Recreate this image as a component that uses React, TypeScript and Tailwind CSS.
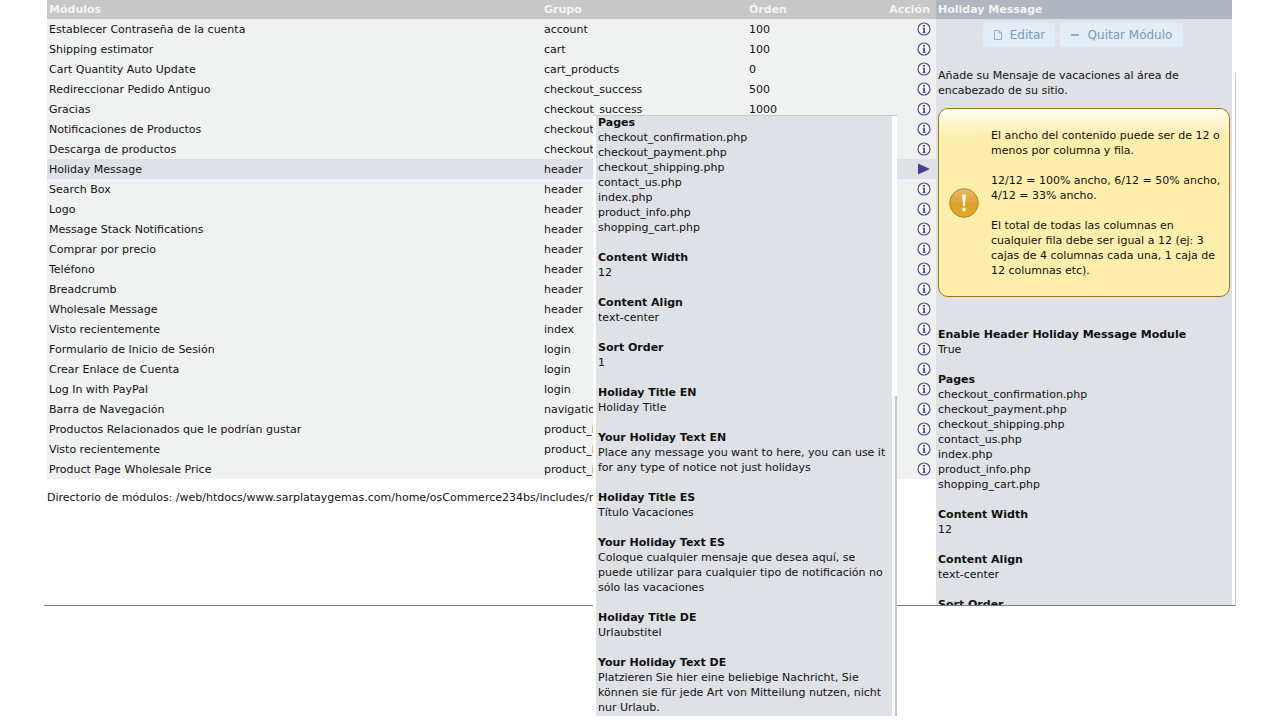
const rows = [
  ["Establecer Contraseña de la cuenta", "account", "100"],
  ["Shipping estimator", "cart", "100"],
  ["Cart Quantity Auto Update", "cart_products", "0"],
  ["Redireccionar Pedido Antiguo", "checkout_success", "500"],
  ["Gracias", "checkout_success", "1000"],
  ["Notificaciones de Productos", "checkout_success", "1000"],
  ["Descarga de productos", "checkout_success", "1000"],
  ["Holiday Message", "header", "1"],
  ["Search Box", "header", "2"],
  ["Logo", "header", "3"],
  ["Message Stack Notifications", "header", "4"],
  ["Comprar por precio", "header", "5"],
  ["Teléfono", "header", "6"],
  ["Breadcrumb", "header", "7"],
  ["Wholesale Message", "header", "8"],
  ["Visto recientemente", "index", "100"],
  ["Formulario de Inicio de Sesión", "login", "100"],
  ["Crear Enlace de Cuenta", "login", "200"],
  ["Log In with PayPal", "login", "300"],
  ["Barra de Navegación", "navigation", "100"],
  ["Productos Relacionados que le podrían gustar", "product_info", "100"],
  ["Visto recientemente", "product_info", "200"],
  ["Product Page Wholesale Price", "product_info", "300"],
]

const settings: [string, string[]][] = [
  ["Pages", ["checkout_confirmation.php", "checkout_payment.php", "checkout_shipping.php", "contact_us.php", "index.php", "product_info.php", "shopping_cart.php"]],
  ["Content Width", ["12"]],
  ["Content Align", ["text-center"]],
  ["Sort Order", ["1"]],
  ["Holiday Title EN", ["Holiday Title"]],
  ["Your Holiday Text EN", ["Place any message you want to here, you can use it for any type of notice not just holidays"]],
  ["Holiday Title ES", ["Título Vacaciones"]],
  ["Your Holiday Text ES", ["Coloque cualquier mensaje que desea aquí, se puede utilizar para cualquier tipo de notificación no sólo las vacaciones"]],
  ["Holiday Title DE", ["Urlaubstitel"]],
  ["Your Holiday Text DE", ["Platzieren Sie hier eine beliebige Nachricht, Sie können sie für jede Art von Mitteilung nutzen, nicht nur Urlaub."]],
]

function InfoIcon() {
  return (
    <svg width="14" height="14" viewBox="0 0 14 14" fill="none">
      <circle cx="7" cy="7" r="6" fill="#fff" stroke="#4f4a94" strokeWidth="1.2" />
      <rect x="6" y="3" width="2" height="1.6" fill="#4f4a94" />
      <path d="M5.4 5.8H8V10.2H8.8V11H5.4V10.2H6.2V6.6H5.4Z" fill="#4f4a94" />
    </svg>
  )
}

function ArrowIcon() {
  return (
    <svg width="14" height="12" viewBox="0 0 14 12">
      <path d="M1 0.5L13 6L1 11.5Z" fill="#44409a" />
    </svg>
  )
}

function WarningIcon() {
  return (
    <svg width="30" height="30" viewBox="0 0 30 30">
      <defs>
        <linearGradient id="warn" x1="0" y1="0" x2="0" y2="1">
          <stop offset="0" stopColor="#e9b968" />
          <stop offset="0.55" stopColor="#dc9f2c" />
          <stop offset="1" stopColor="#e2ab1c" />
        </linearGradient>
      </defs>
      <circle cx="15" cy="15" r="14.3" fill="url(#warn)" stroke="#b5832c" />
      <path d="M13 6.5H17L16 18H14Z" fill="#fff6df" />
      <circle cx="15" cy="21.5" r="2" fill="#fff6df" />
    </svg>
  )
}

function PageIcon() {
  return (
    <svg width="10" height="12" viewBox="0 0 10 12" fill="none" stroke="#8fb1cf">
      <path d="M1.5 1.5H6L8.5 4V10.5H1.5Z" />
      <path d="M6 1.5V4H8.5" />
    </svg>
  )
}

function Settings({ items }: { items: [string, string[]][] }) {
  return (
    <>
      {items.map(([title, lines]) => (
        <div key={title} className="mb-[15px]">
          <div className="font-bold">{title}</div>
          {lines.map((line) => (
            <div key={line}>{line}</div>
          ))}
        </div>
      ))}
    </>
  )
}

export default function App() {
  return (
    <div className="relative h-[720px] overflow-hidden bg-white font-['DejaVu_Sans','Liberation_Sans',sans-serif] text-[11px] leading-[15px] text-[#111]">
      <div className="ml-[44px] flex h-[606px] w-[1192px] overflow-hidden border-b border-[#77797e] pl-[3px]">
        <div className="w-[889px] shrink-0">
          <div className="grid h-[19px] grid-cols-[495px_205px_1fr_auto] items-center bg-[#c7c7c7] pl-[2px] pr-[6px] font-bold text-[#f4f4f4]">
            <span>Módulos</span>
            <span>Grupo</span>
            <span>Órden</span>
            <span>Acción</span>
          </div>
          {rows.map(([name, group, order], i) => (
            <div
              key={name + i}
              className={`grid h-5 grid-cols-[495px_205px_1fr_14px] items-center pl-[2px] pr-[5px] ${
                i === 7 ? "bg-[#dee1e5]" : "bg-[#f0f1f1]"
              }`}
            >
              <span>{name}</span>
              <span>{group}</span>
              <span>{order}</span>
              {i === 7 ? <ArrowIcon /> : <InfoIcon />}
            </div>
          ))}
          <p className="mt-[11px] whitespace-nowrap">
            Directorio de módulos: /web/htdocs/www.sarplataygemas.com/home/osCommerce234bs/includes/modules/content/
          </p>
        </div>
        <div className="w-[296px] shrink-0 bg-[#dee1e6]">
          <div className="h-[19px] bg-[#b0b5c2] pl-[2px] font-bold leading-[19px] text-[#f4f4f4]">Holiday Message</div>
          <div className="mt-[3px] flex justify-center gap-[3px] pr-[2px] text-[12px] text-[#7a9cbb]">
            <button className="flex h-[26px] w-[74px] items-center justify-center gap-[7px] rounded-[4px] border border-[#d9e6f1] bg-[#e2edf6]">
              <PageIcon />
              Editar
            </button>
            <button className="flex h-[26px] w-[125px] items-center justify-center gap-[9px] rounded-[4px] border border-[#d9e6f1] bg-[#e2edf6]">
              <span className="h-[2px] w-2 bg-[#8fb1cf]" />
              Quitar Módulo
            </button>
          </div>
          <div className="px-[2px]">
            <p className="mt-[20px] w-[280px]">Añade su Mensaje de vacaciones al área de encabezado de su sitio.</p>
            <div className="mt-[10px] flex h-[189px] w-[292px] items-center rounded-[10px] border border-[#a5701a] bg-linear-to-b from-[#fffdf0] via-[#fdeeac] via-[15%] to-[#fdeeac] pl-[10px] pr-[8px]">
              <WarningIcon />
              <div className="ml-[12px] flex-1">
                <p>El ancho del contenido puede ser de 12 o menos por columna y fila.</p>
                <p className="mt-[15px]">12/12 = 100% ancho, 6/12 = 50% ancho, 4/12 = 33% ancho.</p>
                <p className="mt-[15px]">El total de todas las columnas en cualquier fila debe ser igual a 12 (ej: 3 cajas de 4 columnas cada una, 1 caja de 12 columnas etc).</p>
              </div>
            </div>
            <div className="mt-[30px]">
              <Settings items={[["Enable Header Holiday Message Module", ["True"]], ...settings]} />
            </div>
          </div>
        </div>
      </div>

      {/* right edge of the page */}
      <div className="absolute left-[1235px] top-[73px] h-[533px] w-px bg-[#c9c9c9]" />

      {/* floating copy of the settings */}
      <div className="absolute left-[593px] top-[115px] h-[605px] w-[304px] overflow-hidden border-t border-[#c9c9c9] bg-white pl-[3px] pr-[5px]">
        <div className="h-[600px] overflow-hidden bg-[#dee1e6] px-[2px]">
          <div className="-mt-px">
            <Settings items={settings} />
          </div>
        </div>
        <div className="absolute right-0 top-[280px] h-[320px] w-[2px] bg-[#c9c9c9]" />
      </div>
    </div>
  )
}
